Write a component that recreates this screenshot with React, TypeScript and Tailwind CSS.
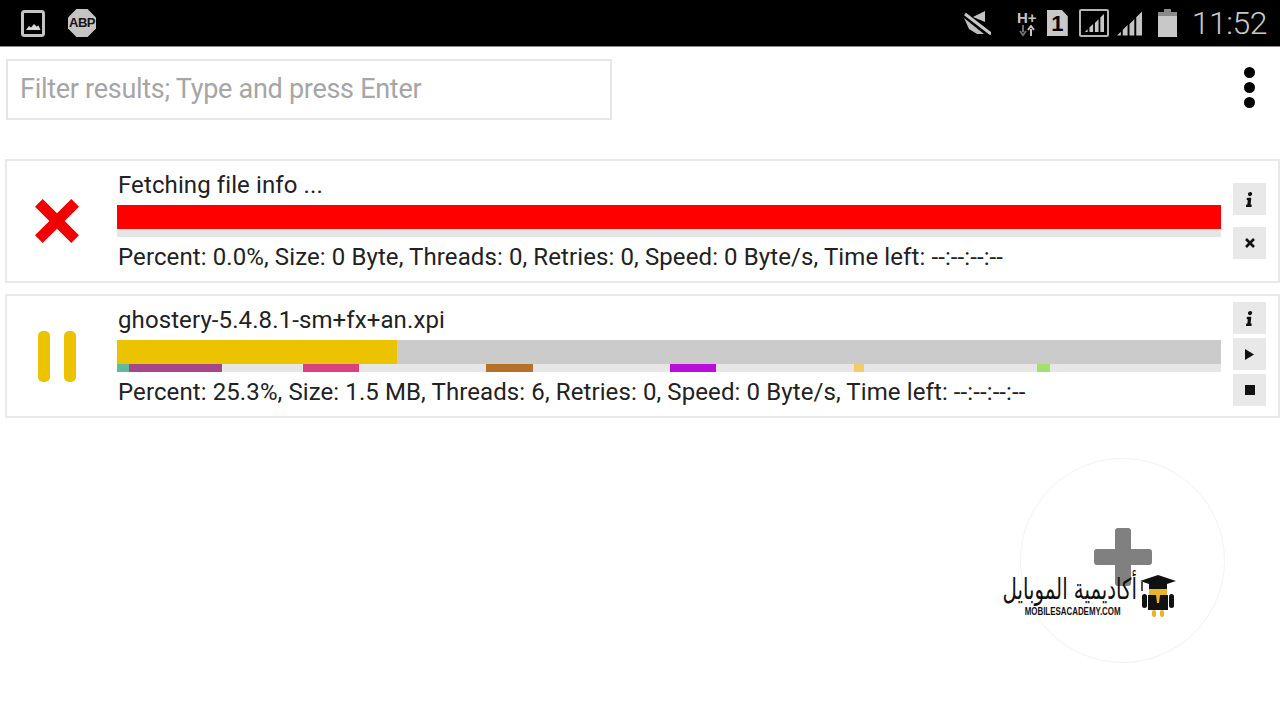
import type { ReactNode } from "react"
import { FaInfo } from "react-icons/fa"

const segments = [
  { w: 12, color: "bg-[#63b9a0]" },
  { w: 93, color: "bg-[#a5478a]" },
  { w: 81, color: "" },
  { w: 56, color: "bg-[#d9417f]" },
  { w: 127, color: "" },
  { w: 47, color: "bg-[#b5702a]" },
  { w: 137, color: "" },
  { w: 46, color: "bg-[#b90ddb]" },
  { w: 138, color: "" },
  { w: 10, color: "bg-[#f2cb6c]" },
  { w: 173, color: "" },
  { w: 13, color: "bg-[#a3e06f]" },
]

function StatusBar() {
  return (
    <div className="flex h-[47px] items-center justify-between border-b border-[#8a8a8a] bg-black pl-[21px] pr-[13px]">
      <div className="flex items-center gap-[23px]">
        <svg width="24" height="27" viewBox="0 0 24 27">
          <rect x="1.5" y="1.5" width="21" height="24" rx="2" fill="none" stroke="#c4c4c4" strokeWidth="3" />
          <path d="M5 20l3-4 2 1.500 3-3.500 2.500 2.500 2-1 2 4.500z" fill="#d8d8d8" />
        </svg>
        <div className="flex h-[28px] w-[28px] items-center justify-center bg-[#c4c4c4] font-['Liberation_Sans',sans-serif] text-[13px] font-bold tracking-[-0.5px] text-[#151515] [clip-path:polygon(30%_0,70%_0,100%_30%,100%_70%,70%_100%,30%_100%,0_70%,0_30%)]">
          ABP
        </div>
      </div>
      <div className="flex items-center">
        <svg width="27" height="24" viewBox="0 0 27 24" className="mr-[25px]">
          <path d="M9 6L21 0v11z" fill="#c4c4c4" />
          <path d="M0 7l20 16h-7L5 18z" fill="#bdbdbd" />
          <path d="M1 3l26 20" stroke="#c8c8c8" strokeWidth="3" />
        </svg>
        <div className="mr-[9px] flex w-[22px] flex-col items-center font-['Liberation_Sans',sans-serif] font-bold leading-none text-[#c4c4c4]">
          <span className="text-[15px] leading-[15px]">H+</span>
          <svg width="18" height="12" viewBox="0 0 18 12">
            <path d="M5 0v7M2 6l3 4 3-4" fill="none" stroke="#6f6f6f" strokeWidth="2" />
            <path d="M13 11V4M10 5l3-4 3 4" fill="none" stroke="#c4c4c4" strokeWidth="2" />
          </svg>
        </div>
        <div className="mr-[11px] flex h-[26px] w-[21px] items-center justify-center bg-[#c8c8c8] pt-[1px] font-['Liberation_Sans',sans-serif] text-[22px] font-bold leading-none text-black [clip-path:polygon(0_0,72%_0,100%_24%,100%_100%,0_100%)]">
          1
        </div>
        <div className="mr-[7px] rounded-[2px] border-2 border-[#b4b4b4] p-[2px]">
          <svg width="22" height="20" viewBox="0 0 24 22" className="block">
            <path d="M2 21h3v-3zM7 21h4v-9l-4 4zM13 21h4V7l-4 4zM19 21h4V1l-4 4z" fill="#c8c8c8" />
          </svg>
        </div>
        <svg width="27" height="27" viewBox="0 0 28 27" className="mr-[15px]">
          <path d="M1 26h4v-4zM7 26h5V15l-5 5zM14 26h5V9l-5 5zM21 26h6V1l-6 6z" fill="#c4c4c4" />
        </svg>
        <svg width="19" height="28" viewBox="0 0 19 28" className="mr-[15px]">
          <path d="M6 0h7v3H6z" fill="#8a8a8a" />
          <path d="M0 3h19v4H0z" fill="#8a8a8a" />
          <path d="M0 7h19v21H0z" fill="#c8c8c8" />
        </svg>
        <span className="text-[32px] font-light leading-none tracking-[-0.5px] text-[#c8c8c8]">11:52</span>
      </div>
    </div>
  )
}

function IconButton({ children }: { children: ReactNode }) {
  return <div className="flex h-[32px] w-[33px] items-center justify-center bg-[#e8e8e8]">{children}</div>
}

function Card({
  status,
  title,
  details,
  bar,
  strip,
  actions,
  gap,
}: {
  status: ReactNode
  title: string
  details: string
  bar: ReactNode
  strip: ReactNode
  actions: ReactNode
  gap: string
}) {
  return (
    <div className="flex h-[124px] border-2 border-[#e9e9e9]">
      <div className="flex w-[110px] shrink-0 items-center justify-center pr-[10px]">{status}</div>
      <div className="flex w-[1104px] shrink-0 flex-col">
        <div className="h-[44px] pl-[1px] pt-[9px] text-[24px] leading-[30px] tracking-[0.1px] text-[#222]">{title}</div>
        <div className="h-[24px] w-full">{bar}</div>
        <div className="h-[8px] w-full">{strip}</div>
        <div className="pl-[1px] pt-[5px] text-[24px] leading-[30px] tracking-[0.1px] text-[#222]">{details}</div>
      </div>
      <div className={`ml-[12px] flex w-[33px] shrink-0 flex-col ${gap}`}>{actions}</div>
    </div>
  )
}

export default function App() {
  return (
    <div className="relative h-[720px] w-[1280px] overflow-hidden bg-white font-['Roboto',sans-serif]">
      <StatusBar />

      <div className="flex items-start justify-between pl-[6px] pr-[25px] pt-[12px]">
        <div className="flex h-[61px] w-[606px] items-center border-2 border-[#e6e6e6] pb-[2px] pl-[12px] text-[28px] tracking-[-0.3px] text-[#a6a6a6]">
          <span className="inline-block origin-left scale-x-[0.965] whitespace-nowrap">Filter results; Type and press Enter</span>
        </div>
        <div className="flex flex-col gap-[4px] pt-[8px]">
          <div className="h-[11px] w-[11px] rounded-full bg-black" />
          <div className="h-[11px] w-[11px] rounded-full bg-black" />
          <div className="h-[11px] w-[11px] rounded-full bg-black" />
        </div>
      </div>

      <div className="mt-[39px] flex flex-col gap-[11px] pl-[5px]">
        <Card
          status={
            <svg width="44" height="44" viewBox="0 0 46 46">
              <path d="M8 0l15 15L38 0l8 8-15 15 15 15-8 8-15-15L8 46l-8-8 15-15L0 8z" fill="#f00000" />
            </svg>
          }
          title="Fetching file info ..."
          details="Percent: 0.0%, Size: 0 Byte, Threads: 0, Retries: 0, Speed: 0 Byte/s, Time left: --:--:--:--"
          bar={<div className="h-full w-full bg-[#ff0000]" />}
          strip={<div className="h-full w-full bg-[#e4e6e6]" />}
          gap="gap-[12px] pt-[22px]"
          actions={
            <>
              <IconButton><FaInfo size={15} color="#111" className="-skew-x-6" /></IconButton>
              <IconButton>
                <svg width="10" height="10" viewBox="0 0 10 10">
                  <path d="M1 1l8 8M9 1l-8 8" stroke="#111" strokeWidth="2.600" />
                </svg>
              </IconButton>
            </>
          }
        />
        <Card
          status={
            <div className="flex gap-[14px]">
              <div className="h-[51px] w-[12px] rounded-[5px] bg-[#ecc300]" />
              <div className="h-[51px] w-[12px] rounded-[5px] bg-[#ecc300]" />
            </div>
          }
          title="ghostery-5.4.8.1-sm+fx+an.xpi"
          details="Percent: 25.3%, Size: 1.5 MB, Threads: 6, Retries: 0, Speed: 0 Byte/s, Time left: --:--:--:--"
          bar={
            <div className="h-full w-full bg-[#cbcbcb]">
              <div className="h-full w-[280px] bg-[#ecc300]" />
            </div>
          }
          strip={
            <div className="flex h-full w-full bg-[#e6e6e6]">
              {segments.map((s, i) => (
                <div key={i} className={`h-full ${s.color}`} style={{ width: s.w }} />
              ))}
            </div>
          }
          gap="gap-[4px] pt-[6px]"
          actions={
            <>
              <IconButton><FaInfo size={15} color="#111" className="-skew-x-6" /></IconButton>
              <IconButton>
                <svg width="9" height="11" viewBox="0 0 9 11"><path d="M0 0l9 5.500L0 11z" fill="#111" /></svg>
              </IconButton>
              <IconButton><div className="h-[10px] w-[10px] bg-[#111]" /></IconButton>
            </>
          }
        />
      </div>

      {/* floating add button, watermark sits over it */}
      <div className="absolute left-[1020px] top-[458px] flex h-[205px] w-[205px] items-center justify-center rounded-full border border-[#f2f2f2]">
        <svg width="58" height="58" viewBox="0 0 58 58" className="-translate-y-[4px]">
          <path d="M24 0h10a3 3 0 0 1 3 3v18h18a3 3 0 0 1 3 3v10a3 3 0 0 1-3 3H37v18a3 3 0 0 1-3 3H24a3 3 0 0 1-3-3V37H3a3 3 0 0 1-3-3V24a3 3 0 0 1 3-3h18V3a3 3 0 0 1 3-3z" fill="#808080" />
        </svg>
      </div>

      <div className="absolute left-[1002px] top-[574px] flex w-[176px] items-start">
        <div className="flex w-[136px] flex-col items-center">
          <span dir="rtl" className="h-[31px] origin-center scale-x-[0.68] whitespace-nowrap font-['DejaVu_Sans',sans-serif] text-[29px] leading-[31px] text-[#111]">
            أكاديمية الموبايل
          </span>
          <span className="ml-[6px] mt-[1px] whitespace-nowrap font-['Liberation_Sans',sans-serif] text-[11px] font-bold leading-[11px] text-[#111]">
            <span className="inline-block origin-center scale-x-[0.72]">MOBILESACADEMY.COM</span>
          </span>
        </div>
        <svg width="36" height="44" viewBox="0 0 36 44" className="ml-[2px]">
          <path d="M18 1L36 7l-18 6L0 7z" fill="#111" />
          <path d="M9 10h18v6H9z" fill="#111" />
          <path d="M2 8v9" stroke="#111" strokeWidth="1.500" />
          <path d="M9 15h18v6H9z" fill="#e6b52c" />
          <path d="M8 21h20v15H8z" fill="#111" />
          <path d="M16 21h4l-1 8h-2z" fill="#e6b52c" />
          <rect x="2" y="20" width="5" height="14" rx="2.500" fill="#111" />
          <rect x="29" y="20" width="5" height="14" rx="2.500" fill="#111" />
          <rect x="12" y="36" width="4" height="7" rx="2" fill="#e6b52c" />
          <rect x="20" y="36" width="4" height="7" rx="2" fill="#e6b52c" />
        </svg>
      </div>
    </div>
  )
}
